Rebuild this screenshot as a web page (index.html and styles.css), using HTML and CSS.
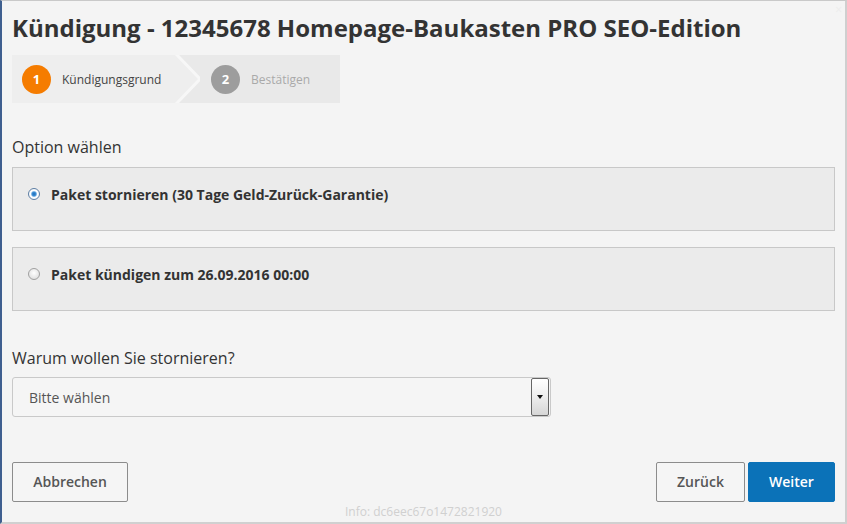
FILE: index.html
```html
<!DOCTYPE html>
<html lang="de">
<head>
<meta charset="utf-8">
<title>Kündigung</title>
<link rel="stylesheet" href="styles.css">
</head>
<body>
<div class="dialog">
  <span class="close">×</span>
  <h1 class="title">Kündigung - 12345678 Homepage-Baukasten PRO SEO-Edition</h1>
  <div class="stepper">
    <div class="step step-active">
      <span class="num num-active">1</span>
      <span class="step-label">Kündigungsgrund</span>
    </div>
    <svg class="chevron" width="25" height="48" viewBox="0 0 25 48">
      <rect x="0" y="0" width="25" height="48" fill="#e9e9e9"/>
      <polygon points="0,0 1,0 25,24 1,48 0,48" fill="#eeeeee"/>
      <polyline points="1,-1 25,24 1,49" fill="none" stroke="#f7f7f7" stroke-width="3"/>
    </svg>
    <div class="step step-next">
      <span class="num num-next">2</span>
      <span class="step-label muted">Bestätigen</span>
    </div>
  </div>

  <h2 class="section-label">Option wählen</h2>
  <label class="option">
    <span class="radio radio-on"></span>
    <span class="option-text">Paket stornieren (30 Tage Geld-Zurück-Garantie)</span>
  </label>
  <label class="option">
    <span class="radio"></span>
    <span class="option-text">Paket kündigen zum 26.09.2016 00:00</span>
  </label>

  <h2 class="section-label reason">Warum wollen Sie stornieren?</h2>
  <div class="select">
    <span class="select-text">Bitte wählen</span>
    <span class="select-btn"><span class="arrow"></span></span>
  </div>

  <div class="actions">
    <button class="btn btn-default">Abbrechen</button>
    <div class="actions-right">
      <button class="btn btn-default">Zurück</button>
      <button class="btn btn-primary">Weiter</button>
    </div>
  </div>
  <div class="info">Info: dc6eec67o1472821920</div>
</div>
</body>
</html>
```

FILE: styles.css
```css
* { box-sizing: border-box; }
html, body { margin: 0; padding: 0; }
body {
  width: 847px;
  height: 524px;
  font-family: "Open Sans", "Liberation Sans", sans-serif;
  color: #333;
  background: #f4f4f4;
  overflow: hidden;
}
.dialog {
  position: relative;
  width: 847px;
  height: 524px;
  background: #f4f4f4;
  border-left: 2px solid #3f5f8f;
  border-top: 1px solid #c9c9c9;
  border-right: 2px solid #cfcfcf;
  border-bottom: 2px solid #d0d0d0;
  padding: 0 10px 0 10px;
}
.close {
  position: absolute;
  right: 3px;
  top: 0;
  font-size: 12px;
  color: #ececec;
}
.title {
  margin: 0;
  padding-top: 11px;
  font-size: 24px;
  line-height: 31px;
  font-weight: 700;
  color: #333;
  height: 42px;
  white-space: nowrap;
}
.stepper {
  margin-top: 12px;
  display: flex;
  width: 328px;
  height: 48px;
}
.step {
  display: flex;
  align-items: center;
  height: 48px;
}
.step-active {
  width: 163px;
  background: #eeeeee;
  padding-left: 10px;
}
.step-next {
  flex: 1;
  background: #e9e9e9;
  padding-left: 11px;
}
.chevron { display: block; flex: none; }
.num {
  width: 29px;
  height: 29px;
  border-radius: 50%;
  color: #fff;
  font-weight: 700;
  font-size: 13px;
  display: flex;
  align-items: center;
  justify-content: center;
  margin-right: 11px;
}
.num-active { background: #f57c00; }
.num-next { background: #9d9d9d; }
.step-label { font-size: 12px; color: #444; }
.muted { color: #a9a9a9; }

.section-label {
  margin: 0;
  font-size: 16px;
  font-weight: 400;
  color: #333;
  line-height: 22px;
  padding-top: 33px;
  padding-bottom: 9px;
}
.option {
  display: flex;
  align-items: center;
  height: 64px;
  width: 823px;
  background: #ebebeb;
  border: 1px solid #c8c8c8;
  padding-left: 15px;
  padding-bottom: 10px;
  margin-bottom: 16px;
}
.radio {
  width: 12px;
  height: 12px;
  border-radius: 50%;
  border: 1px solid #a0a0a0;
  background: radial-gradient(circle at 50% 40%, #ffffff 0%, #d8d8d8 100%);
  margin-right: 11px;
  flex: none;
}
.radio-on {
  border-color: #5d7ea3;
  background: radial-gradient(circle, #1d6db8 0, #3d8fd6 28%, #ffffff 48%, #e6eef5 100%);
}
.option-text { font-size: 14px; font-weight: 700; color: #333; }

.reason { padding-top: 20px; padding-bottom: 8px; }
.select {
  display: flex;
  align-items: center;
  justify-content: space-between;
  width: 539px;
  height: 40px;
  border: 1px solid #c9c9c9;
  border-radius: 3px;
  background: #f5f5f5;
  padding: 0 1px 0 16px;
}
.select-text { font-size: 14px; color: #555; }
.select-btn {
  width: 18px;
  height: 38px;
  border: 1px solid #666;
  border-radius: 2px;
  background: linear-gradient(#ffffff, #f0f0f0 45%, #d6d6d6);
  display: flex;
  align-items: center;
  justify-content: center;
}
.arrow {
  width: 0;
  height: 0;
  border-left: 3.5px solid transparent;
  border-right: 3.5px solid transparent;
  border-top: 4px solid #111;
}
.actions {
  margin-top: 45px;
  display: flex;
  justify-content: space-between;
  width: 823px;
}
.actions-right { display: flex; gap: 3px; }
.btn {
  height: 40px;
  font-family: "Open Sans", "Liberation Sans", sans-serif;
  font-size: 14px;
  font-weight: 600;
  border-radius: 2px;
  padding: 0;
  padding-bottom: 2px;
}
.btn-default {
  background: #f5f5f5;
  border: 1px solid #8c8c8c;
  color: #555;
}
.actions > .btn-default { width: 116px; }
.actions-right .btn-default { width: 89px; }
.btn-primary {
  width: 87px;
  background: #0b72b8;
  border: 1px solid #0b72b8;
  color: #fff;
}
.info {
  margin-top: 2px;
  text-align: center;
  font-size: 12px;
  color: #d0d0d0;
  line-height: 16px;
}
```
